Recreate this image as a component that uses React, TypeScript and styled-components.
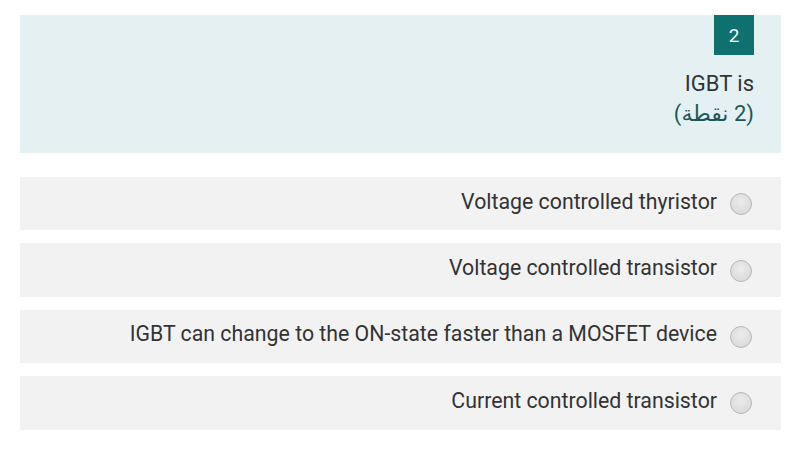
import styled, { createGlobalStyle } from "styled-components";

const GlobalStyle = createGlobalStyle`
	body {
		margin: 0;
		background: #ffffff;
		font-family: Roboto, "Noto Sans", "Liberation Sans", sans-serif;
	}
`;

const Page = styled.div`
	direction: rtl;
	padding: 15px 19px 0 20px;
`;

const QuestionBox = styled.div`
	background-color: #e5f0f2;
	padding: 0 27px 24px 27px;
	display: flex;
	flex-direction: column;
	align-items: flex-start;
`;

const Badge = styled.div`
	width: 40px;
	height: 40px;
	background-color: #0f7070;
	color: #ffffff;
	font-size: 19px;
	display: flex;
	align-items: center;
	justify-content: center;
`;

const QuestionText = styled.div`
	margin-top: 15px;
	font-size: 22px;
	line-height: 28px;
	color: #333333;
`;

const Points = styled.div`
	font-size: 22px;
	line-height: 31px;
	color: #1b5757;
	font-family: Roboto, "Noto Sans", "DejaVu Sans", sans-serif;
`;

const Options = styled.div`
	margin-top: 24px;
	display: flex;
	flex-direction: column;
	gap: 13px;
`;

const Option = styled.label`
	height: 53.4px;
	background-color: #f2f2f2;
	display: flex;
	align-items: center;
	gap: 13px;
	padding: 0 29px;
	font-size: 21.3px;
	color: #333333;
`;

const Radio = styled.span`
	width: 22px;
	height: 22px;
	border-radius: 50%;
	border: 1px solid #b8b8b8;
	background: radial-gradient(circle at 50% 40%, #ececec 0%, #dcdcdc 70%);
	box-sizing: border-box;
	flex-shrink: 0;
	margin-top: 1px;
`;

const Label = styled.span`
	direction: ltr;
	padding-bottom: 5px;
`;

const answers = [
	"Voltage controlled thyristor",
	"Voltage controlled transistor",
	"IGBT can change to the ON-state faster than a MOSFET device",
	"Current controlled transistor",
];

export default function App() {
	return (
		<>
			<GlobalStyle />
			<Page>
				<QuestionBox>
					<Badge>2</Badge>
					<QuestionText>IGBT is</QuestionText>
					<Points>(2 نقطة)</Points>
				</QuestionBox>
				<Options>
					{answers.map((a) => (
						<Option key={a}>
							<Radio />
							<Label>{a}</Label>
						</Option>
					))}
				</Options>
			</Page>
		</>
	);
}
